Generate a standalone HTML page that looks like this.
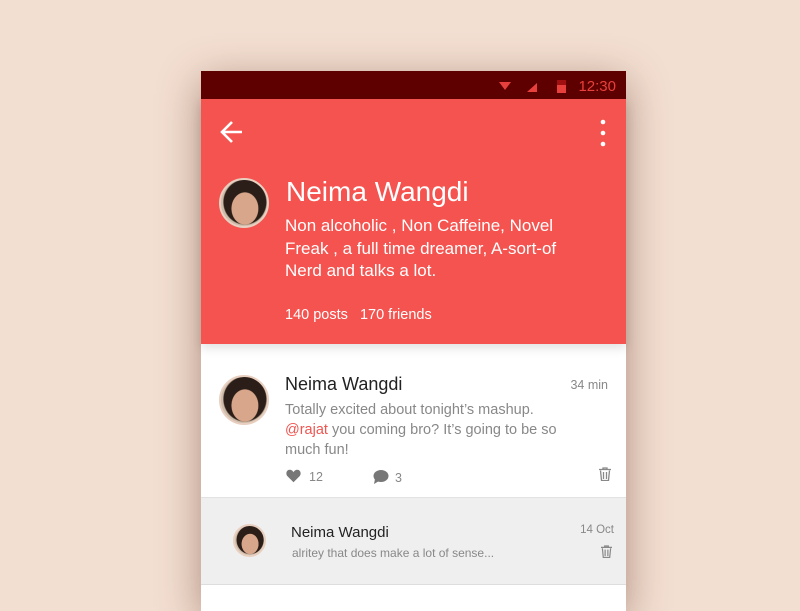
<!DOCTYPE html>
<html><head><meta charset="utf-8"><style>
*{margin:0;padding:0;box-sizing:border-box}
body{width:800px;height:600px;background:#f3dfd2;font-family:"Liberation Sans",sans-serif;position:relative;overflow:hidden}
.phone{position:absolute;left:201px;top:71px;width:425px;height:540px;background:#fff;box-shadow:0 10px 40px rgba(90,40,20,.45)}
.status{height:28px;background:#5e0000;position:relative}
.status .time{position:absolute;right:10px;top:7px;color:#e8403c;font-size:15px}
.header{height:245px;background:#f5534f;position:relative;color:#fff;z-index:2;box-shadow:0 4px 10px rgba(0,0,0,.12)}
.av{position:absolute;border-radius:50%;border:2px solid #e8cfc0;overflow:hidden;
background:radial-gradient(ellipse 30% 36% at 52% 62%,#d8a68a 0 95%,transparent 100%),radial-gradient(ellipse 48% 50% at 52% 48%,#2b1d17 0 95%,transparent 100%),#cdbba9}
.name{position:absolute;left:85px;top:77px;font-size:28px}
.bio{position:absolute;left:84px;top:116px;font-size:17px;line-height:22.5px;width:300px}
.stats{position:absolute;left:84px;top:208px;font-size:14.5px}
.card{position:absolute;left:0;top:273px;width:425px;height:153px;background:#fff}
.card2{position:absolute;left:0;top:426px;width:425px;height:88px;background:#efefef;border-top:1px solid #e2e2e2;border-bottom:1px solid #ddd}
.t{position:absolute;color:#222}
.g{color:#888}
</style></head><body>
<div class="phone">
 <div class="status">
  <svg style="position:absolute;left:298px;top:9px" width="70" height="14"><polygon points="0,2 12,2 6,10" fill="#e8403c"/><polygon points="28,12 38,12 38,3" fill="#e8403c"/><rect x="58" y="0" width="9" height="13" fill="#e8403c"/><rect x="58" y="0" width="9" height="5" fill="#a01010"/></svg>
  <span class="time">12:30</span>
 </div>
 <div class="header">
  <svg style="position:absolute;left:18px;top:20px" width="26" height="26" viewBox="0 0 26 26"><path d="M23 13H4M13 3L3 13l10 10" stroke="#fff" stroke-width="2.6" fill="none"/></svg>
  <svg style="position:absolute;left:399px;top:20px" width="6" height="28"><circle cx="3" cy="3" r="2.3" fill="#fff"/><circle cx="3" cy="14" r="2.3" fill="#fff"/><circle cx="3" cy="25" r="2.3" fill="#fff"/></svg>
  <div class="av" style="left:18px;top:79px;width:50px;height:50px"></div>
  <div class="name">Neima Wangdi</div>
  <div class="bio">Non alcoholic , Non Caffeine, Novel Freak , a full time dreamer, A-sort-of Nerd and talks a lot.</div>
  <div class="stats">140 posts&nbsp;&nbsp;&nbsp;170 friends</div>
 </div>
 <div class="card">
  <div class="av" style="left:18px;top:31px;width:50px;height:50px"></div>
  <div class="t" style="left:84px;top:30px;font-size:18px">Neima Wangdi</div>
  <div class="t g" style="right:18px;top:34px;font-size:12.5px">34 min</div>
  <div class="t g" style="left:84px;top:56px;font-size:14.5px;line-height:20px;width:290px">Totally excited about tonight’s mashup. <span style="color:#f05550">@rajat</span> you coming bro? It’s going to be so much fun!</div>
  <svg style="position:absolute;left:85px;top:125px" width="15" height="14" viewBox="0 0 24 22"><path d="M12 21L2 11C-1 7 1 1 6 1c3 0 5 2 6 4 1-2 3-4 6-4 5 0 7 6 4 10z" fill="#777"/></svg>
  <span class="t g" style="left:108px;top:126px;font-size:12.5px">12</span>
  <svg style="position:absolute;left:172px;top:125px" width="16" height="16" viewBox="0 0 16 16"><ellipse cx="8" cy="7" rx="7.5" ry="6" fill="#777"/><path d="M2 10L1 15 6 12z" fill="#777"/></svg>
  <span class="t g" style="left:194px;top:127px;font-size:12.5px">3</span>
  <svg style="position:absolute;left:398px;top:123px" width="12" height="14" viewBox="0 0 12 14"><path d="M0 2.5h12M4 2.5V1h4v1.5M1.5 3.5l1 10h7l1-10M4.5 5v7M7.5 5v7" stroke="#888" stroke-width="1.3" fill="none"/></svg>
 </div>
 <div class="card2">
  <div class="av" style="left:32px;top:26px;width:33px;height:33px"></div>
  <div class="t" style="left:90px;top:26px;font-size:15px">Neima Wangdi</div>
  <div class="t g" style="right:12px;top:26px;font-size:11.5px">14 Oct</div>
  <div class="t g" style="left:91px;top:48px;font-size:12px">alritey that does make a lot of sense...</div>
  <svg style="position:absolute;left:400px;top:47px" width="11" height="13" viewBox="0 0 12 14"><path d="M0 2.5h12M4 2.5V1h4v1.5M1.5 3.5l1 10h7l1-10M4.5 5v7M7.5 5v7" stroke="#888" stroke-width="1.3" fill="none"/></svg>
 </div>
</div>
</body></html>
